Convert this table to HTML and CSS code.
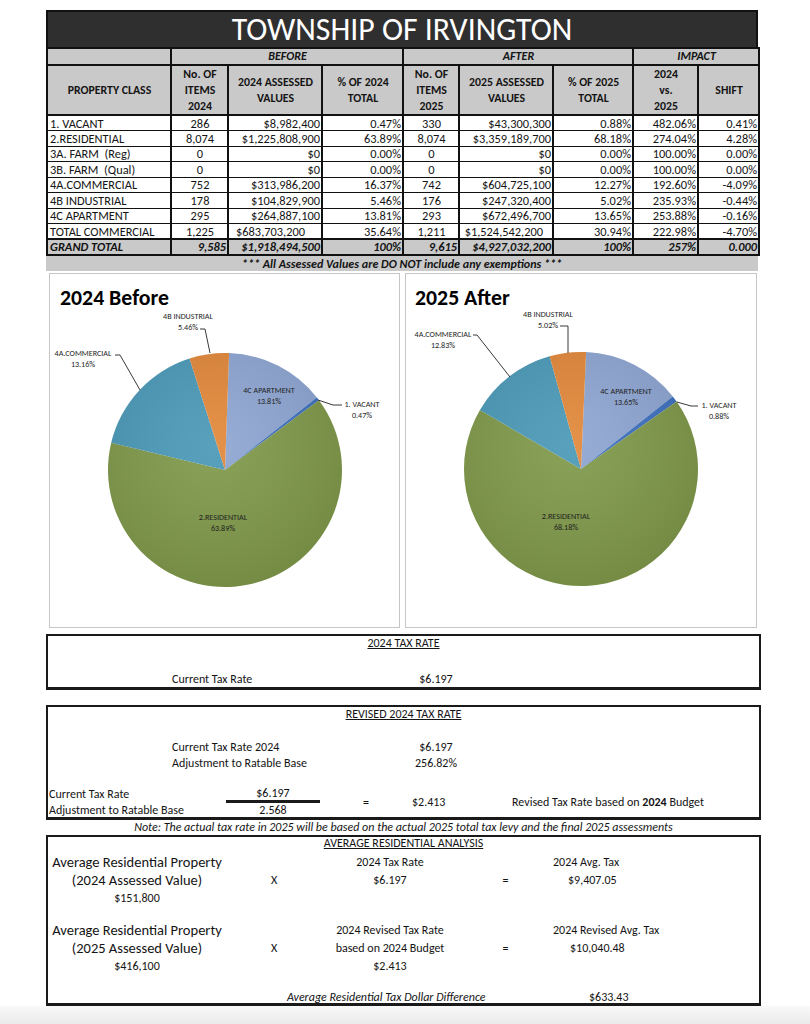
FILE: index.html
```html
<!DOCTYPE html>
<html>
<head>
<meta charset="utf-8">
<title>Township of Irvington</title>
<link rel="stylesheet" href="styles.css">
</head>
<body>
<div class="page">
  <div class="sheet">
    <div class="title">TOWNSHIP OF IRVINGTON</div>
    <table class="grid">
      <colgroup>
        <col class="w124"><col class="w57"><col class="w94"><col class="w81"><col class="w56"><col class="w94"><col class="w80"><col class="w65"><col class="w61">
      </colgroup>
      <tr class="band">
        <td></td><td colspan="3">BEFORE</td><td colspan="3">AFTER</td><td colspan="2">IMPACT</td>
      </tr>
      <tr class="head">
        <th>PROPERTY CLASS</th>
        <th>No. OF<br>ITEMS<br>2024</th>
        <th>2024 ASSESSED<br>VALUES</th>
        <th>% OF 2024<br>TOTAL</th>
        <th>No. OF<br>ITEMS<br>2025</th>
        <th>2025 ASSESSED<br>VALUES</th>
        <th>% OF 2025<br>TOTAL</th>
        <th>2024<br>vs.<br>2025</th>
        <th>SHIFT</th>
      </tr>
      <tr><td>1. VACANT</td><td class="c">286</td><td class="r">$8,982,400</td><td class="r">0.47%</td><td class="c">330</td><td class="r">$43,300,300</td><td class="r">0.88%</td><td class="r">482.06%</td><td class="r">0.41%</td></tr>
      <tr><td>2.RESIDENTIAL</td><td class="c">8,074</td><td class="r">$1,225,808,900</td><td class="r">63.89%</td><td class="c">8,074</td><td class="r">$3,359,189,700</td><td class="r">68.18%</td><td class="r">274.04%</td><td class="r">4.28%</td></tr>
      <tr><td>3A. FARM&nbsp; (Reg)</td><td class="c">0</td><td class="r">$0</td><td class="r">0.00%</td><td class="c">0</td><td class="r">$0</td><td class="r">0.00%</td><td class="r">100.00%</td><td class="r">0.00%</td></tr>
      <tr><td>3B. FARM&nbsp; (Qual)</td><td class="c">0</td><td class="r">$0</td><td class="r">0.00%</td><td class="c">0</td><td class="r">$0</td><td class="r">0.00%</td><td class="r">100.00%</td><td class="r">0.00%</td></tr>
      <tr><td>4A.COMMERCIAL</td><td class="c">752</td><td class="r">$313,986,200</td><td class="r">16.37%</td><td class="c">742</td><td class="r">$604,725,100</td><td class="r">12.27%</td><td class="r">192.60%</td><td class="r">-4.09%</td></tr>
      <tr><td>4B INDUSTRIAL</td><td class="c">178</td><td class="r">$104,829,900</td><td class="r">5.46%</td><td class="c">176</td><td class="r">$247,320,400</td><td class="r">5.02%</td><td class="r">235.93%</td><td class="r">-0.44%</td></tr>
      <tr><td>4C APARTMENT</td><td class="c">295</td><td class="r">$264,887,100</td><td class="r">13.81%</td><td class="c">293</td><td class="r">$672,496,700</td><td class="r">13.65%</td><td class="r">253.88%</td><td class="r">-0.16%</td></tr>
      <tr><td>TOTAL COMMERCIAL</td><td class="c">1,225</td><td class="r pad16">$683,703,200</td><td class="r">35.64%</td><td class="c">1,211</td><td class="r pad9">$1,524,542,200</td><td class="r">30.94%</td><td class="r">222.98%</td><td class="r">-4.70%</td></tr>
      <tr class="total"><td>GRAND TOTAL</td><td class="r">9,585</td><td class="r">$1,918,494,500</td><td class="r">100%</td><td class="r">9,615</td><td class="r">$4,927,032,200</td><td class="r">100%</td><td class="r">257%</td><td class="r">0.000</td></tr>
    </table>
    <div class="note">*** All Assessed Values are DO NOT include any exemptions ***</div>
  </div>

  <div class="charts">
    <div class="chart">
      <svg class="pie" width="349" height="353" viewBox="1 1 349 353">
        <defs>
          <radialGradient id="shade" cx="0.45" cy="0.4" r="0.65">
            <stop offset="0" stop-color="#fff" stop-opacity="0.08"/>
            <stop offset="1" stop-color="#000" stop-opacity="0.10"/>
          </radialGradient>
        </defs>
        <text class="ctitle" x="11" y="32">2024 Before</text>
        <path class="s4c" d="M176,197 L180.08,80.07 A117,117 0 0 1 267.83,124.51 Z"/>
        <path class="svac" d="M176,197 L267.83,124.51 A117,117 0 0 1 269.93,127.25 Z"/>
        <path class="sres" d="M176,197 L269.93,127.25 A117,117 0 1 1 62.19,169.86 Z"/>
        <path class="s4a" d="M176,197 L62.19,169.86 A117,117 0 0 1 140.51,85.51 Z"/>
        <path class="s4b" d="M176,197 L140.51,85.51 A117,117 0 0 1 180.08,80.07 Z"/>
        <circle class="gloss" cx="176" cy="197" r="117"/>
        <polyline class="lead" points="151,56 156,56 161,80"/>
        <polyline class="lead" points="66,82 71,82 91,117"/>
        <polyline class="lead" points="269,127 284,132 293,132"/>
        <text class="lbl" x="139" y="46">4B INDUSTRIAL</text>
        <text class="lbl" x="139" y="57">5.46%</text>
        <text class="lbl" x="34" y="83">4A.COMMERCIAL</text>
        <text class="lbl" x="34" y="94">13.16%</text>
        <text class="lbl" x="220" y="120">4C APARTMENT</text>
        <text class="lbl" x="220" y="131">13.81%</text>
        <text class="lbl" x="313" y="134">1. VACANT</text>
        <text class="lbl" x="313" y="145">0.47%</text>
        <text class="lbl" x="174" y="247">2.RESIDENTIAL</text>
        <text class="lbl" x="174" y="258">63.89%</text>
      </svg>
    </div>
    <div class="chart wide">
      <svg class="pie" width="350" height="353" viewBox="1 1 350 353">
        <text class="ctitle" x="10" y="32">2025 After</text>
        <path class="s4c" d="M176,196 L181.10,79.11 A117,117 0 0 1 267.74,123.39 Z"/>
        <path class="svac" d="M176,196 L267.74,123.39 A117,117 0 0 1 271.61,128.57 Z"/>
        <path class="sres" d="M176,196 L271.61,128.57 A117,117 0 1 1 74.94,137.05 Z"/>
        <path class="s4a" d="M176,196 L74.94,137.05 A117,117 0 0 1 144.59,83.29 Z"/>
        <path class="s4b" d="M176,196 L144.59,83.29 A117,117 0 0 1 181.10,79.11 Z"/>
        <circle class="gloss" cx="176" cy="196" r="117"/>
        <polyline class="lead" points="155,53 163,53 163,80"/>
        <polyline class="lead" points="68,62 72,62 105,104"/>
        <polyline class="lead" points="272,129 286,133 293,133"/>
        <text class="lbl" x="143" y="44">4B INDUSTRIAL</text>
        <text class="lbl" x="143" y="55">5.02%</text>
        <text class="lbl" x="38" y="64">4A.COMMERCIAL</text>
        <text class="lbl" x="38" y="75">12.83%</text>
        <text class="lbl" x="221" y="121">4C APARTMENT</text>
        <text class="lbl" x="221" y="132">13.65%</text>
        <text class="lbl" x="314" y="135">1. VACANT</text>
        <text class="lbl" x="314" y="146">0.88%</text>
        <text class="lbl" x="161" y="246">2.RESIDENTIAL</text>
        <text class="lbl" x="161" y="257">68.18%</text>
      </svg>
    </div>
  </div>

  <div class="box box1">
    <div class="btitle"><span>2024 TAX RATE</span></div>
    <div class="kv kv1">
      <div>Current Tax Rate</div><div class="val">$6.197</div>
    </div>
  </div>

  <div class="box box2">
    <div class="btitle"><span>REVISED 2024 TAX RATE</span></div>
    <div class="kv kv2">
      <div>Current Tax Rate 2024</div><div class="val">$6.197</div>
      <div>Adjustment to Ratable Base</div><div class="val">256.82%</div>
    </div>
    <div class="frac">
      <div class="fl r1">Current Tax Rate</div>
      <div class="fn">$6.197</div>
      <div class="feq">=</div>
      <div class="fres">$2.413</div>
      <div class="fnote">Revised Tax Rate based on <b>2024</b> Budget</div>
      <div class="fl r2">Adjustment to Ratable Base</div>
      <div class="fd">2.568</div>
    </div>
  </div>

  <div class="boxnote">Note: The actual tax rate in 2025 will be based on the actual 2025 total tax levy and the final 2025 assessments</div>

  <div class="box box3">
    <div class="btitle t3"><span>AVERAGE RESIDENTIAL ANALYSIS</span></div>
    <div class="avg">
      <div class="al big">Average Residential Property</div>
      <div class="ax"></div>
      <div class="am">2024 Tax Rate</div>
      <div class="ae"></div>
      <div class="ar">2024 Avg. Tax</div>

      <div class="al big">(2024 Assessed Value)</div>
      <div class="ax">X</div>
      <div class="am">$6.197</div>
      <div class="ae">=</div>
      <div class="ar ind">$9,407.05</div>

      <div class="al">$151,800</div>
      <div class="ax"></div>
      <div class="am"></div>
      <div class="ae"></div>
      <div class="ar"></div>
    </div>
    <div class="avg avg2">
      <div class="al big">Average Residential Property</div>
      <div class="ax"></div>
      <div class="am">2024 Revised Tax Rate</div>
      <div class="ae"></div>
      <div class="ar">2024 Revised Avg. Tax</div>

      <div class="al big">(2025 Assessed Value)</div>
      <div class="ax">X</div>
      <div class="am">based on 2024 Budget</div>
      <div class="ae">=</div>
      <div class="ar ind2">$10,040.48</div>

      <div class="al">$416,100</div>
      <div class="ax"></div>
      <div class="am">$2.413</div>
      <div class="ae"></div>
      <div class="ar"></div>
    </div>
    <div class="diff">
      <div class="dl">Average Residential Tax Dollar Difference</div>
      <div class="dv">$633.43</div>
    </div>
  </div>
  <div class="shade"></div>
</div>
</body>
</html>
```

FILE: styles.css
```css
* { box-sizing: border-box; }
html, body { margin: 0; padding: 0; }
body {
  background: #fff;
  font-family: Carlito, Calibri, "Liberation Sans Narrow", "Liberation Sans", sans-serif;
  font-size: 12px;
  color: #141414;
}
.page { width: 810px; height: 1024px; overflow: hidden; padding-top: 10px; }

.sheet { margin-left: 46px; width: 712px; }
.title {
  height: 37px;
  background: #2f2f2f;
  border: 2px solid #111;
  border-bottom: none;
  color: #fff;
  font-size: 31.8px;
  line-height: 36px;
  text-align: center;
}

.grid { border-collapse: collapse; table-layout: fixed; width: 712px; }
.w124 { width: 124px; } .w57 { width: 57px; } .w94 { width: 94px; } .w81 { width: 81px; }
.w56 { width: 56px; } .w80 { width: 80px; } .w65 { width: 65px; } .w61 { width: 61px; }
.grid td, .grid th {
  border-left: 2px solid #111;
  border-right: 2px solid #111;
  border-top: 1px solid #111;
  border-bottom: 1px solid #111;
  padding: 0 1px 0 2px;
  height: 15.5px;
  font-size: 12.4px;
  line-height: 13px;
  white-space: nowrap;
  overflow: hidden;
  font-weight: normal;
}
.grid .c { text-align: center; }
.grid .r { text-align: right; }
.grid .pad16 { padding-right: 16px; }
.grid .pad9 { padding-right: 9px; }
.band td {
  background: #c9c9c9;
  height: 17px;
  font-size: 12px;
  font-weight: bold;
  font-style: italic;
  text-align: center;
  border-top: 2px solid #111;
  border-bottom: 2px solid #111;
}
.head th {
  background: #c9c9c9;
  height: 48px;
  font-weight: bold;
  font-size: 11.8px;
  line-height: 16px;
  text-align: center;
  vertical-align: middle;
  border-bottom: 2px solid #111;
}
.total td {
  background: #c9c9c9;
  font-weight: bold;
  font-style: italic;
  border-top: 2px solid #111;
  border-bottom: 2px solid #111;
}
.note {
  height: 15px;
  background: #c9c9c9;
  font-size: 12.1px;
  font-weight: bold;
  font-style: italic;
  text-align: center;
  line-height: 15px;
}

.charts { display: flex; gap: 5px; margin: 2px 0 0 49px; }
.chart {
  width: 351px;
  height: 355px;
  border: 1px solid #c6c6c6;
  background: #fff;
}
.chart.wide { width: 352px; }
.pie { display: block; }
.ctitle { font-family: Carlito, Calibri, "Liberation Sans Narrow", "Liberation Sans", sans-serif; font-size: 21.8px; font-weight: bold; fill: #000; }
.lbl { font-family: Carlito, Calibri, "Liberation Sans Narrow", "Liberation Sans", sans-serif; font-size: 8.1px; fill: #1e1e1e; text-anchor: middle; }
.lead { fill: none; stroke: #222; stroke-width: 0.9; }
.gloss { fill: url(#shade); }
.s4c { fill: #8ea6d2; }
.svac { fill: #3d71c0; }
.sres { fill: #80994a; }
.s4a { fill: #4a99b7; }
.s4b { fill: #e2883a; }

.box {
  margin-left: 46px;
  width: 715px;
  border: 2px solid #1a1a1a;
  border-bottom-width: 3px;
  background: #fff;
}
.box1 { margin-top: 6px; height: 56px; }
.box2 { margin-top: 15px; height: 115px; }
.box3 { height: 171px; }
.btitle { text-align: center; line-height: 14px; height: 14px; }
.btitle span { text-decoration: underline; }
.btitle.t3 { line-height: 12px; height: 12px; }

.kv { display: grid; grid-template-columns: 220px 88px; padding-left: 124px; line-height: 16px; }
.kv .val { text-align: center; }
.kv1 { margin-top: 21px; }
.kv2 { margin-top: 18px; }

.frac {
  display: grid;
  grid-template-columns: 178px 94px 92px 100px auto;
  grid-template-rows: 16px 15px;
  margin-top: 16px;
}
.fl { grid-column: 1; padding-left: 1px; line-height: 15px; }
.fl.r1 { grid-row: 1; }
.fl.r2 { grid-row: 2; }
.fn { grid-column: 2; grid-row: 1; text-align: center; line-height: 13px; border-bottom: 3px solid #1a1a1a; }
.fd { grid-column: 2; grid-row: 2; text-align: center; line-height: 15px; }
.feq { grid-column: 3; grid-row: 1 / span 2; align-self: center; text-align: center; }
.fres { grid-column: 4; grid-row: 1 / span 2; align-self: center; }
.fnote { grid-column: 5; grid-row: 1 / span 2; align-self: center; }

.boxnote {
  margin-left: 46px;
  width: 715px;
  height: 15px;
  line-height: 15px;
  text-align: center;
  font-style: italic;
}

.avg {
  display: grid;
  grid-template-columns: 178px 96px 136px 95px auto;
  grid-auto-rows: 18px;
  line-height: 18px;
  margin-top: 4px;
}
.avg2 { margin-top: 14px; }
.al { text-align: center; }
.al.big { font-size: 14.5px; }
.ax, .am, .ae { text-align: center; }
.ar.ind { padding-left: 15px; }
.ar.ind2 { padding-left: 17px; }

.diff { display: flex; margin-top: 16px; padding-left: 239px; line-height: 13px; }
.dl { width: 302px; font-style: italic; }

.shade { height: 20px; background: linear-gradient(#f9f9f9, #e8e8e8); }
```
